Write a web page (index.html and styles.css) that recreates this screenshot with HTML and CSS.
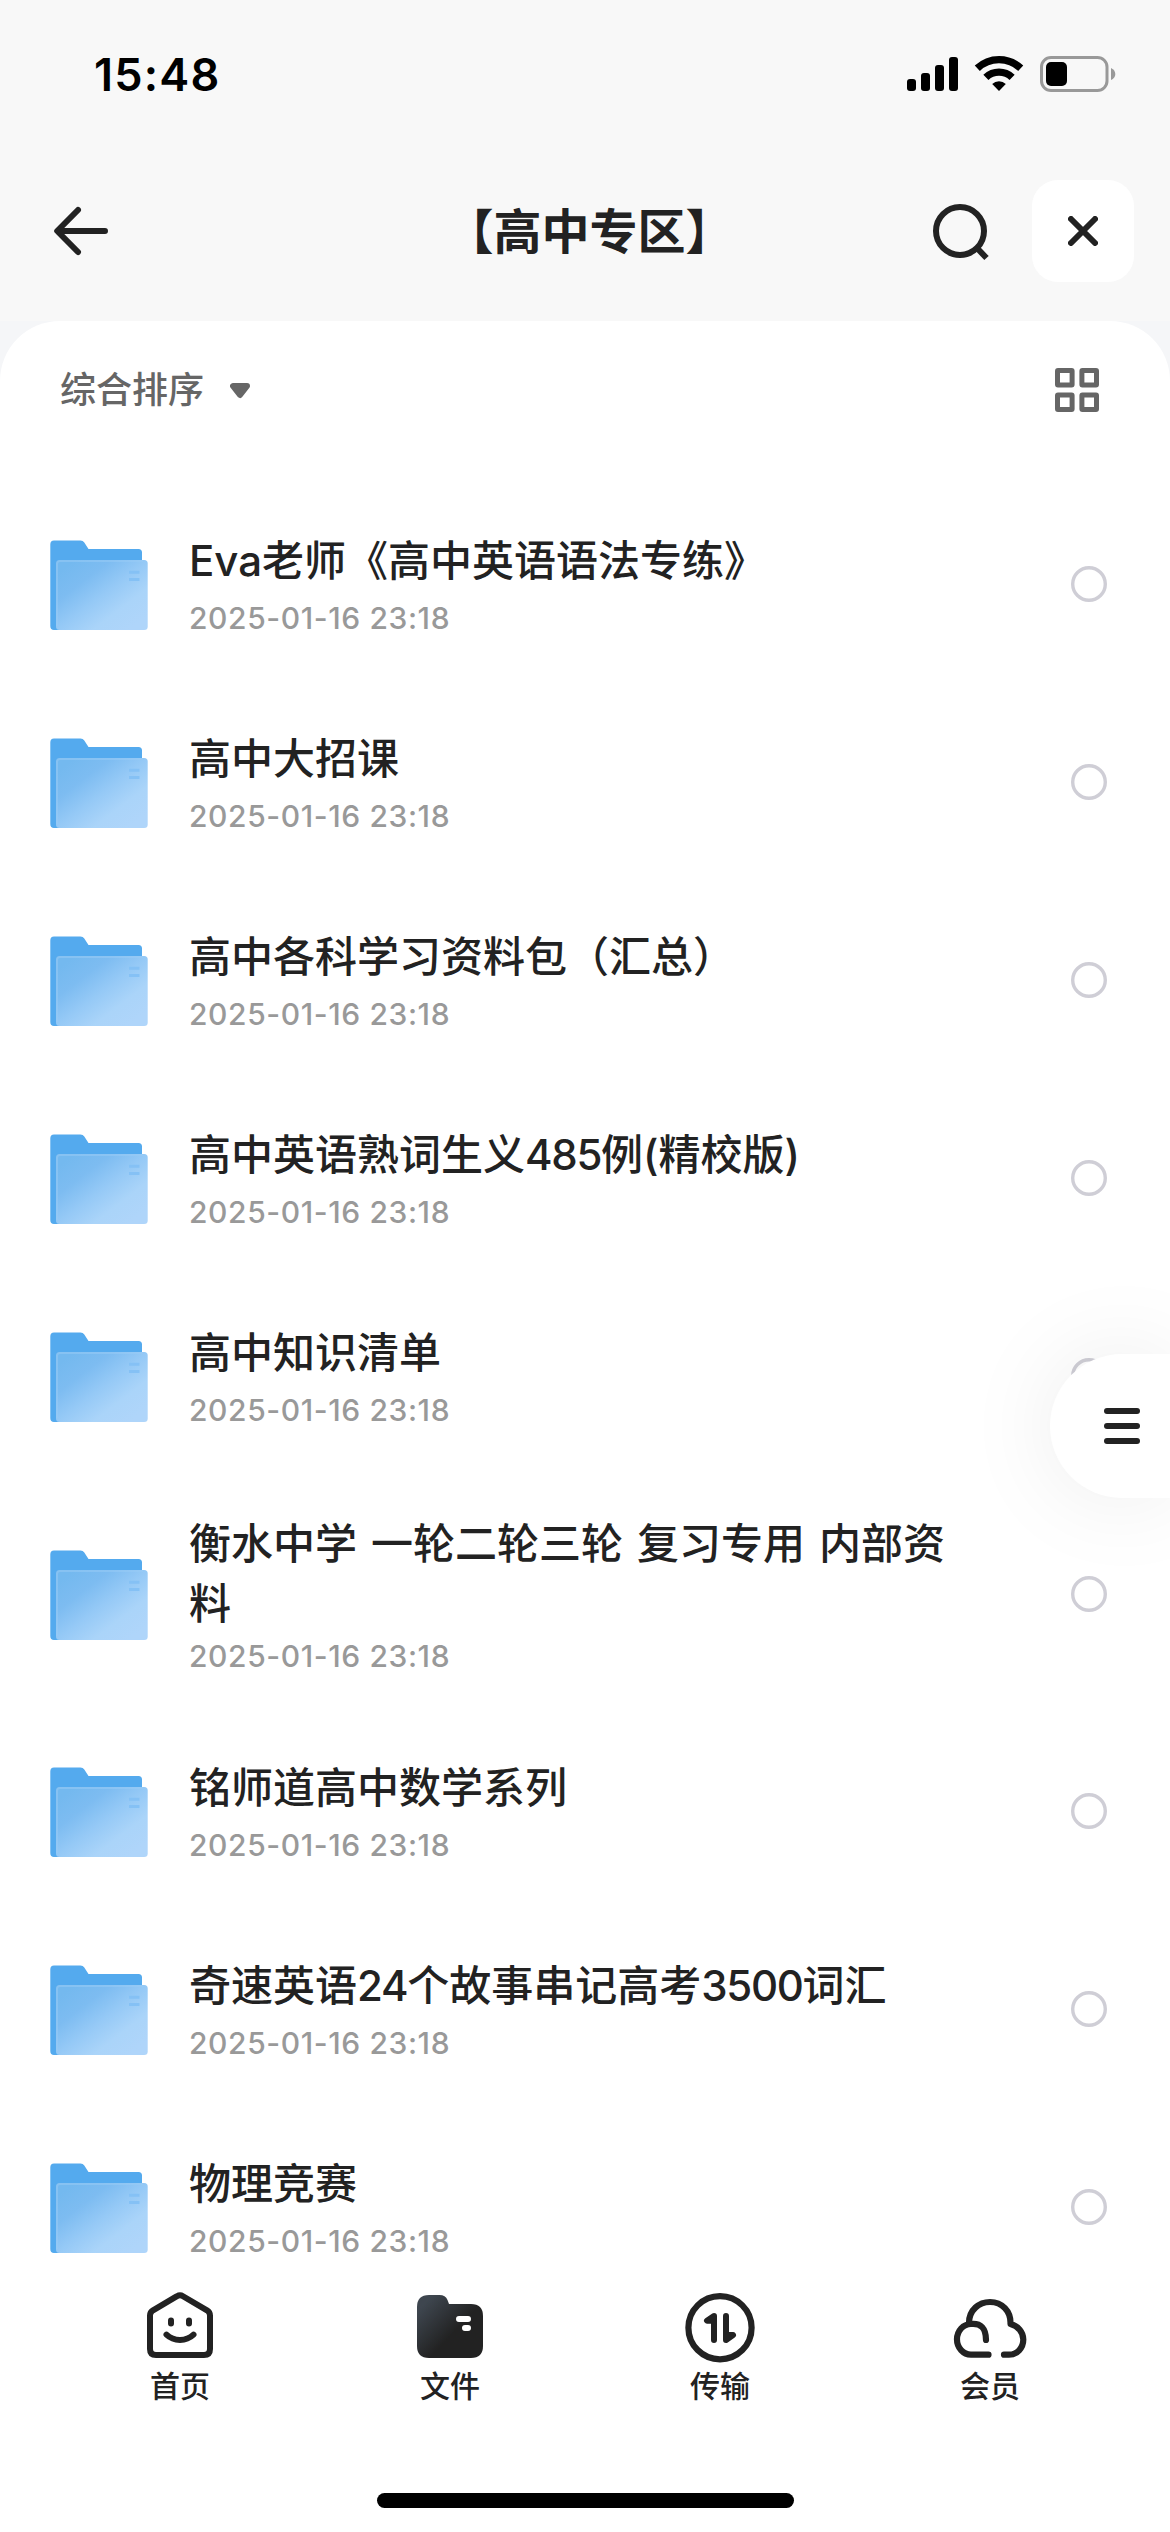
FILE: index.html
```
<!DOCTYPE html>
<html lang="zh-CN">
<head>
    <meta charset="UTF-8">
    <meta name="viewport" content="width=device-width, initial-scale=1.0">
    <title>高中专区</title>
    <link rel="stylesheet" href="styles.css">
</head>
<body>
    <!-- shared icons -->
    <svg class="sprite" width="0" height="0">
        <defs>
            <linearGradient id="front" x1="0.1" y1="0.1" x2="0.9" y2="0.9">
                <stop offset="0" stop-color="#74b9ef"/>
                <stop offset="0.25" stop-color="#7dbcf1"/>
                <stop offset="0.5" stop-color="#95c9f6"/>
                <stop offset="0.75" stop-color="#aad4f9"/>
                <stop offset="1" stop-color="#afd5fa"/>
            </linearGradient>
            <linearGradient id="dark" x1="0" y1="0.1" x2="0.55" y2="0.6">
                <stop offset="0.15" stop-color="#3e464f"/>
                <stop offset="1" stop-color="#222"/>
            </linearGradient>
        </defs>
        <symbol id="folder" viewBox="0 0 98 92">
            <path d="M4 2.5H30.5Q33 2.5 34.3 4.5L38.5 11H88.5Q92 11 92 14.5V60H20V92H4Q0.3 92 0.3 88V6.5Q0.3 2.5 4 2.5Z" fill="#54aaee"/>
            <rect x="6" y="22" width="91.7" height="70" rx="3.5" fill="url(#front)"/>
            <path d="M7 88V26Q7 23 10 23H93" fill="none" stroke="#9accf5" stroke-width="2" opacity="0.5"/>
            <path d="M79 34.3H89.5M79 41.5H89.5" stroke="#85c1f5" stroke-width="3"/>
        </symbol>
        <symbol id="radio" viewBox="0 0 36 36">
            <circle cx="18" cy="18" r="16.3" fill="none" stroke="#cfced6" stroke-width="3.4"/>
        </symbol>
    </svg>

    <div class="status-bar">
        <span class="time">15:48</span>
        <svg class="status-icons" width="210" height="38" viewBox="906 55 210 38">
            <rect x="907" y="79" width="9" height="12" rx="3"/>
            <rect x="921" y="73" width="9" height="18" rx="3"/>
            <rect x="935" y="65" width="9" height="26" rx="3"/>
            <rect x="949" y="57" width="9" height="34" rx="3"/>
            <g fill="none" stroke="#000" stroke-width="7.4">
                <path d="M977.3 68.3A31.5 31.5 0 0 1 1020.7 68.3"/>
                <path d="M985.9 77.4A19 19 0 0 1 1012.1 77.4"/>
            </g>
            <path d="M999 91L992.2 84A9.6 9.6 0 0 1 1005.8 84Z"/>
            <rect x="1041.5" y="57.5" width="65.5" height="33" rx="9.5" fill="none" stroke="#999" stroke-width="3"/>
            <rect x="1046" y="62" width="21" height="24" rx="5"/>
            <path d="M1111 68Q1115.3 70 1115.3 74T1111 80Z" fill="#999"/>
        </svg>
    </div>

    <div class="header">
        <svg class="back" width="54" height="50" viewBox="0 0 54 50">
            <path d="M24 4L3.2 25L24 46M3.5 25H51" fill="none" stroke="#222" stroke-width="6" stroke-linecap="round" stroke-linejoin="round"/>
        </svg>
        <h1>【高中专区】</h1>
        <div class="actions">
            <svg width="58" height="60" viewBox="0 0 58 60">
                <circle cx="28" cy="30" r="24" fill="none" stroke="#222" stroke-width="6"/>
                <path d="M44.5 46.5L54.5 57" stroke="#222" stroke-width="6"/>
            </svg>
            <div class="close">
                <svg width="30" height="30" viewBox="0 0 30 30">
                    <path d="M3 3L27 27M27 3L3 27" stroke="#222" stroke-width="6" stroke-linecap="round"/>
                </svg>
            </div>
        </div>
    </div>

    <div class="content">
        <div class="panel">
            <div class="toolbar">
                <span class="sort">综合排序</span>
                <svg class="caret" width="20" height="16" viewBox="0 0 20 16">
                    <path d="M3 3H17L10 12Z" fill="#666" stroke="#666" stroke-width="6" stroke-linejoin="round"/>
                </svg>
                <svg class="grid" width="44" height="44" viewBox="0 0 44 44">
                    <g fill="none" stroke="#666" stroke-width="5">
                        <rect x="2.5" y="2.5" width="14.6" height="14.6" rx="0.5"/>
                        <rect x="26.9" y="2.5" width="14.6" height="14.6" rx="0.5"/>
                        <rect x="2.5" y="26.9" width="14.6" height="14.6" rx="0.5"/>
                        <rect x="26.9" y="26.9" width="14.6" height="14.6" rx="0.5"/>
                    </g>
                </svg>
            </div>

            <div class="list">
                <div class="row">
                    <svg class="folder"><use href="#folder"/></svg>
                    <div class="info">
                        <div class="name">Eva老师《高中英语语法专练》</div>
                        <div class="date">2025-01-16 23:18</div>
                    </div>
                    <svg class="radio"><use href="#radio"/></svg>
                </div>
                <div class="row">
                    <svg class="folder"><use href="#folder"/></svg>
                    <div class="info">
                        <div class="name">高中大招课</div>
                        <div class="date">2025-01-16 23:18</div>
                    </div>
                    <svg class="radio"><use href="#radio"/></svg>
                </div>
                <div class="row">
                    <svg class="folder"><use href="#folder"/></svg>
                    <div class="info">
                        <div class="name">高中各科学习资料包（汇总）</div>
                        <div class="date">2025-01-16 23:18</div>
                    </div>
                    <svg class="radio"><use href="#radio"/></svg>
                </div>
                <div class="row">
                    <svg class="folder"><use href="#folder"/></svg>
                    <div class="info">
                        <div class="name">高中英语熟词生义<span class="num">485</span>例(精校版)</div>
                        <div class="date">2025-01-16 23:18</div>
                    </div>
                    <svg class="radio"><use href="#radio"/></svg>
                </div>
                <div class="row">
                    <svg class="folder"><use href="#folder"/></svg>
                    <div class="info">
                        <div class="name">高中知识清单</div>
                        <div class="date">2025-01-16 23:18</div>
                    </div>
                    <svg class="radio"><use href="#radio"/></svg>
                </div>
                <div class="row tall">
                    <svg class="folder"><use href="#folder"/></svg>
                    <div class="info">
                        <div class="name">衡水中学 一轮二轮三轮 复习专用 内部资料</div>
                        <div class="date">2025-01-16 23:18</div>
                    </div>
                    <svg class="radio"><use href="#radio"/></svg>
                </div>
                <div class="row">
                    <svg class="folder"><use href="#folder"/></svg>
                    <div class="info">
                        <div class="name">铭师道高中数学系列</div>
                        <div class="date">2025-01-16 23:18</div>
                    </div>
                    <svg class="radio"><use href="#radio"/></svg>
                </div>
                <div class="row">
                    <svg class="folder"><use href="#folder"/></svg>
                    <div class="info">
                        <div class="name">奇速英语<span class="num">24</span>个故事串记高考<span class="num">3500</span>词汇</div>
                        <div class="date">2025-01-16 23:18</div>
                    </div>
                    <svg class="radio"><use href="#radio"/></svg>
                </div>
                <div class="row">
                    <svg class="folder"><use href="#folder"/></svg>
                    <div class="info">
                        <div class="name">物理竞赛</div>
                        <div class="date">2025-01-16 23:18</div>
                    </div>
                    <svg class="radio"><use href="#radio"/></svg>
                </div>
            </div>
        </div>
    </div>

    <div class="tab-bar">
        <div class="tabs">
            <div class="tab">
                <svg width="78" height="78" viewBox="0 0 78 78">
                    <g fill="none" stroke="#222" stroke-width="6" stroke-linecap="round" stroke-linejoin="round">
                        <path d="M36 10.2Q39 8.4 42 10.2L66 24.3Q69 26.2 69 29.5V63Q69 69 63 69H15Q9 69 9 63V29.5Q9 26.2 12 24.3Z"/>
                        <path d="M30 34.5V37.5M48 34.5V37.5"/>
                        <path d="M25.5 48.7Q31 54 39 54T52.5 48.7"/>
                    </g>
                </svg>
                <span>首页</span>
            </div>
            <div class="tab">
                <svg width="78" height="78" viewBox="0 0 78 78">
                    <path d="M18 9H28.5Q34.5 9 36.5 14L38 18H60Q72 18 72 30V60Q72 72 60 72H18Q6 72 6 60V21Q6 9 18 9Z" fill="url(#dark)"/>
                    <path d="M48 33H57M54 42H57" stroke="#fff" stroke-width="6" stroke-linecap="round"/>
                </svg>
                <span>文件</span>
            </div>
            <div class="tab">
                <svg width="78" height="78" viewBox="0 0 78 78">
                    <circle cx="39" cy="41.7" r="31.6" fill="none" stroke="#222" stroke-width="6.2"/>
                    <g fill="#222" stroke="#222" stroke-width="6" stroke-linecap="round" stroke-linejoin="round">
                        <path d="M33 54V30L26 34.7H33"/>
                        <path d="M45 30V54L52 49H45"/>
                    </g>
                </svg>
                <span>传输</span>
            </div>
            <div class="tab">
                <svg width="78" height="78" viewBox="0 0 78 78">
                    <g fill="none" stroke="#222" stroke-width="6.2" stroke-linecap="round" stroke-linejoin="round">
                        <path d="M37.5 68.7H20A14 15.3 0 0 1 20 38Q35 36.5 35 54"/>
                        <path d="M18 37C18 24 28 16 39 16C51 16 60 25 59.5 38C67 40 72.3 46 72.3 53.5C72.3 62 66 68.7 58 68.7H53"/>
                    </g>
                </svg>
                <span>会员</span>
            </div>
        </div>
        <div class="home-indicator"></div>
    </div>

    <div class="side-menu">
        <i></i>
        <i></i>
        <i></i>
    </div>
</body>
</html>
```

FILE: styles.css
```
* {
    box-sizing: border-box;
}
body {
    position: relative;
    display: flex;
    flex-direction: column;
    width: 1170px;
    height: 2532px;
    margin: 0;
    overflow: hidden;
    background-color: #fff;
    color: #222;
    font-family: Inter, "Noto Sans CJK SC", sans-serif;
}
svg {
    display: block;
    flex-shrink: 0;
}
.sprite {
    position: absolute;
}
.status-bar {
    display: flex;
    justify-content: space-between;
    height: 141px;
    padding: 55px 54px 0 94px;
    background-color: #f8f8f8;
}
.time {
    height: 40px;
    color: #000;
    font-size: 45px;
    font-weight: 600;
    letter-spacing: 1.2px;
    line-height: 40px;
}
.header {
    display: grid;
    grid-template-columns: 1fr auto 1fr;
    align-items: center;
    height: 180px;
    padding: 0 36px 0 45px;
    background-color: #f8f8f8;
}
.back {
    margin-left: 9px;
}
h1 {
    margin: 2px 0 0;
    font-size: 48px;
    font-weight: 600;
    line-height: 60px;
    white-space: nowrap;
}
.actions {
    display: flex;
    align-items: center;
    justify-content: flex-end;
    gap: 42px;
}
.close {
    display: flex;
    align-items: center;
    justify-content: center;
    width: 102px;
    height: 102px;
    border-radius: 26px;
    background-color: #fff;
}
.content {
    flex: 1;
    min-height: 0;
    overflow: hidden;
    background-color: #f5f6f8;
}
.panel {
    border-radius: 60px 60px 0 0;
    background-color: #fff;
}
.toolbar {
    display: flex;
    align-items: center;
    height: 136px;
    padding: 0 71px 0 60px;
}
.sort {
    padding-top: 2px;
    color: #666;
    font-size: 36px;
    font-weight: 500;
    line-height: 50px;
}
.caret {
    margin-top: 3px;
    margin-left: 26px;
}
.grid {
    margin-top: 2px;
    margin-left: auto;
}
.list {
    padding-top: 28px;
}
.row {
    display: flex;
    align-items: center;
    height: 198px;
    padding: 0 63px 0 50px;
}
.row.tall {
    height: 237px;
}
.folder {
    width: 98px;
    height: 92px;
}
.info {
    flex: 1;
    padding: 0 105px 2px 41px;
}
.name {
    font-size: 42px;
    font-weight: 500;
    line-height: 60px;
    word-spacing: 2.8px;
}
.name .num {
    letter-spacing: -1.3px;
}
.date {
    margin-top: 9px;
    color: #999;
    font-size: 30px;
    font-weight: 500;
    letter-spacing: 0.6px;
    line-height: 36px;
}
.tall .info {
    padding-bottom: 0;
}
.tall .date {
    margin-top: 4px;
}
.radio {
    width: 36px;
    height: 36px;
}
.tab-bar {
    height: 270px;
    background-color: #fff;
}
.tabs {
    display: flex;
    padding: 24px 45px 0;
}
.tab {
    display: flex;
    flex: 1;
    flex-direction: column;
    align-items: center;
    font-size: 30px;
    font-weight: 500;
    line-height: 44px;
}
.home-indicator {
    width: 417px;
    height: 15px;
    margin: 85px auto 0;
    border-radius: 8px;
    background-color: #000;
}
/* floats over the list at the right edge */
.side-menu {
    position: absolute;
    top: 1354px;
    right: 0;
    display: flex;
    flex-direction: column;
    justify-content: center;
    gap: 9px;
    width: 120px;
    height: 144px;
    padding-left: 54px;
    border-radius: 72px 0 0 72px;
    background-color: #fff;
    box-shadow: 0 0 96px rgba(0, 0, 0, 0.08);
}
.side-menu i {
    width: 36px;
    height: 6px;
    border-radius: 3px;
    background-color: #222;
}
```
